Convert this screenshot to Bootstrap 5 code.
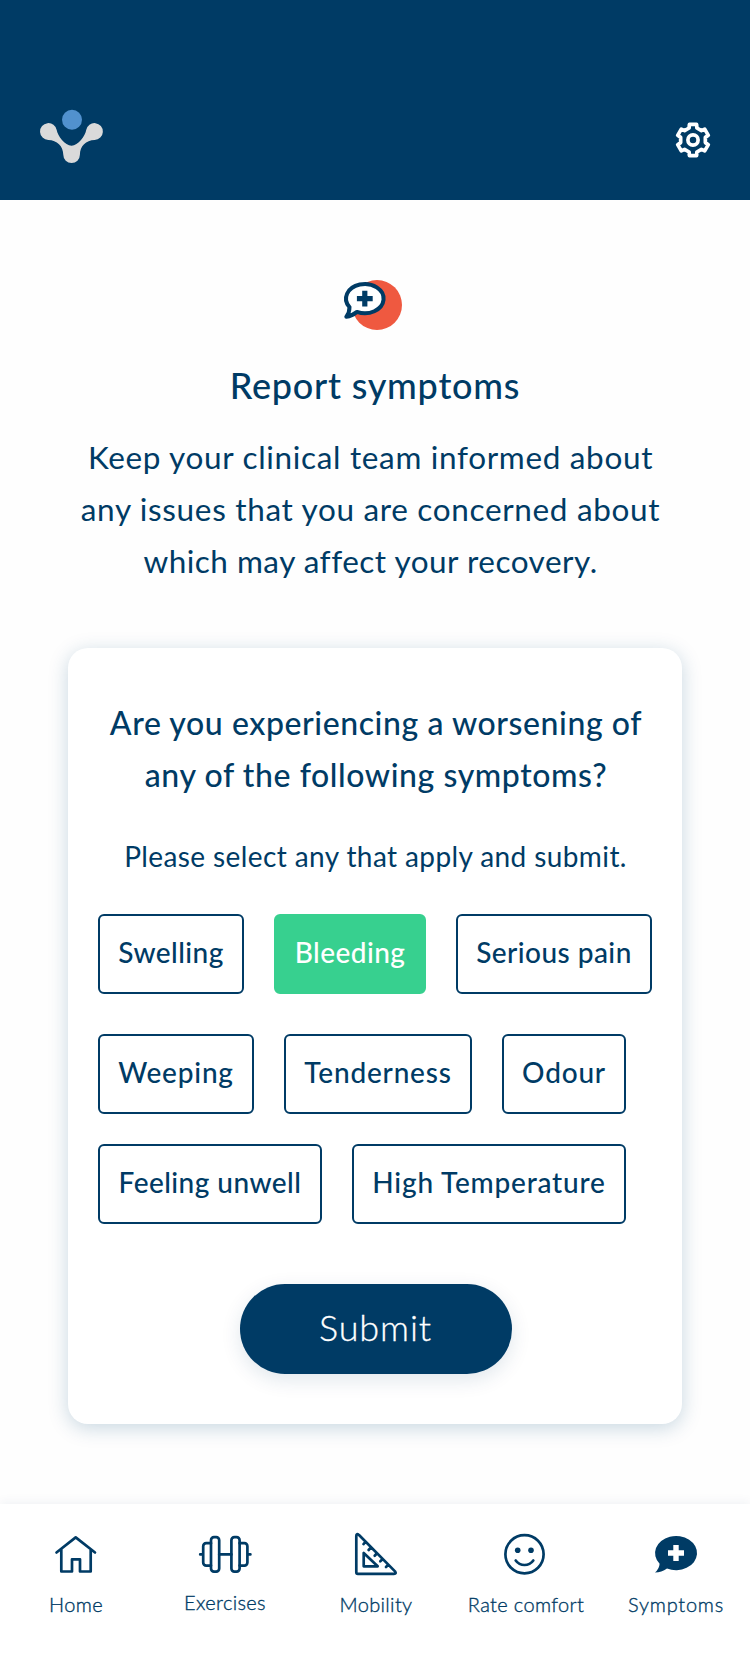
<!DOCTYPE html>
<html lang="en">
<head>
<meta charset="utf-8">
<meta name="viewport" content="width=device-width, initial-scale=1">
<title>Report symptoms</title>
<link href="https://cdn.jsdelivr.net/npm/bootstrap@5.3.0/dist/css/bootstrap.min.css" rel="stylesheet">
<style>
:root{--navy:#003b65}
body{font-family:Lato,"Open Sans",sans-serif;color:var(--navy);background:#fefefe}
svg{display:block;overflow:visible}
.line-icon{fill:none;stroke:var(--navy);stroke-width:2.7;stroke-linecap:round;stroke-linejoin:round}
.topbar{height:200px;background:var(--navy);padding:106px 37px 0 36px}
.topbar .gear{margin-top:14px}
.intro-icon{margin-top:75px}
.page-title{font-size:36px;line-height:48px;font-weight:500;letter-spacing:.75px;margin-top:26px}
.intro{font-size:31.5px;line-height:52px;margin-top:22px;padding-right:9px;letter-spacing:.67px}
.intro .last-line{letter-spacing:.5px}
.question-card{width:614px;height:776px;margin:61px auto 0;padding:49px 30px 50px;border:0;border-radius:20px;background:#fff;box-shadow:0 4px 20px rgba(0,74,120,.22)}
.question{font-size:32px;line-height:52px;font-weight:500;letter-spacing:.58px;padding-left:2px}
.hint{font-size:28px;line-height:40px;margin-top:35px;letter-spacing:.4px;padding-left:1px}
.chips{display:grid;gap:30px;height:80px}
.chips-a{grid-template-columns:146px 152px 196px;margin-top:38px}
.chips-b{grid-template-columns:156px 188px 124px;margin-top:40px}
.chips-c{grid-template-columns:224px 274px;margin-top:30px}
.chip{border:2px solid var(--navy);border-radius:6px;color:var(--navy);font-size:28px;font-weight:500;letter-spacing:.45px;padding:0 0 4px;white-space:nowrap}
.chips-b .chip,.chip.wide{letter-spacing:.8px}
.chip.active{background:#37d08f;border-color:#37d08f;color:#fff}
.submit{width:272px;height:90px;border:0;border-radius:45px;margin:60px 0 0 142px;background:var(--navy);color:#fff;font-size:36px;font-weight:300;letter-spacing:.9px;padding:0 1px 4px 0;-webkit-text-stroke:.3px #fff;box-shadow:0 6px 20px rgba(0,59,101,.12)}
.tabs{height:170px;margin-top:80px;background:#fff;box-shadow:0 -2px 10px rgba(0,59,101,.06);padding-top:20px}
.tab{width:150px;color:var(--navy);font-size:20px;line-height:30px;letter-spacing:.35px;text-decoration:none;white-space:nowrap}
.tab span{padding-left:2px;margin-top:5px;font-weight:300;-webkit-text-stroke:.35px var(--navy)}
.tab .raised{margin-top:3px;padding-left:0}
.tab .loose{letter-spacing:.75px}
</style>
</head>
<body>
<header class="topbar d-flex justify-content-between align-items-start">
  <svg width="72" height="60" viewBox="0 0 72 60" aria-label="Logo">
    <circle cx="36" cy="13.7" r="10" fill="#5191ce"/>
    <path fill="#dadada" d="M12.3 33.9A8.4 8.4 0 1 1 20.7 24C21.5 29.5 29 39.7 35.6 39.7C42 39.7 49.5 29.5 50.2 24A8.4 8.4 0 1 1 58.6 33.9C50 34 44 40 43.9 48.8A8.3 8.3 0 0 1 27.3 48.8C27.2 40 21 34 12.3 33.9Z"/>
  </svg>
  <svg class="gear" width="40" height="40" viewBox="-20 -20 40 40" fill="none" stroke="#fff" stroke-width="3.7" stroke-linejoin="round" aria-label="Settings">
    <path d="M-3.9-12L-3.6-15.6H3.6L3.9-12L8.44-9.38L11.71-10.92L15.31-4.68L12.34-2.62V2.62L15.31 4.68L11.71 10.92L8.44 9.38L3.9 12L3.6 15.6H-3.6L-3.9 12L-8.44 9.38L-11.71 10.92L-15.31 4.68L-12.34 2.62V-2.62L-15.31-4.68L-11.71-10.92L-8.44-9.38Z"/>
    <circle r="5.1"/>
  </svg>
</header>
<main>
  <svg class="intro-icon mx-auto" width="70" height="60" viewBox="0 0 70 60">
    <circle cx="37" cy="30" r="25" fill="#ef5940"/>
    <path d="M9.5 32.1A18.8 14.6 0 1 1 17 36.9Q12 41 6.3 41.8Q9.5 38 9.5 32.1Z" fill="#fff" stroke="#003b65" stroke-width="4" stroke-linejoin="round"/>
    <path d="M24.8 15.8V31.6M16.9 23.7H32.7" stroke="#003b65" stroke-width="5.2"/>
  </svg>
  <h1 class="page-title text-center mb-0">Report symptoms</h1>
  <p class="intro text-center mb-0">Keep your clinical team informed about<br>any issues that you are concerned about<br><span class="last-line">which may affect your recovery.</span></p>
  <section class="question-card card">
    <h2 class="question text-center mb-0">Are you experiencing a worsening of<br>any of the following symptoms?</h2>
    <p class="hint text-center mb-0">Please select any that apply and submit.</p>
    <div class="chips chips-a">
      <button type="button" class="btn chip">Swelling</button>
      <button type="button" class="btn chip active">Bleeding</button>
      <button type="button" class="btn chip">Serious pain</button>
    </div>
    <div class="chips chips-b">
      <button type="button" class="btn chip">Weeping</button>
      <button type="button" class="btn chip">Tenderness</button>
      <button type="button" class="btn chip">Odour</button>
    </div>
    <div class="chips chips-c">
      <button type="button" class="btn chip">Feeling unwell</button>
      <button type="button" class="btn chip wide">High Temperature</button>
    </div>
    <button type="button" class="btn submit">Submit</button>
  </section>
</main>
<nav class="tabs d-flex">
  <a class="tab d-flex flex-column align-items-center">
    <svg class="line-icon" width="60" height="60" viewBox="0 0 60 60"><path d="M11.5 28.5L30.7 13.4L50 28.5M16.3 25.5V47.5H27V35.3H35V47.5H45.7V25.5"/></svg>
    <span>Home</span>
  </a>
  <a class="tab d-flex flex-column align-items-center">
    <svg class="line-icon" width="60" height="60" viewBox="0 0 60 60"><rect x="16" y="13.2" width="8.2" height="34.4" rx="3"/><rect x="36.4" y="13.2" width="8.2" height="34.4" rx="3"/><path d="M16 19.2H11.2a3 3 0 0 0-3 3V38.6a3 3 0 0 0 3 3H16M44.6 19.2H49.4a3 3 0 0 1 3 3V38.6a3 3 0 0 1-3 3H44.6M24.2 30.4H36.4M5.2 30.4H8.2M52.4 30.4H55.4"/></svg>
    <span class="raised">Exercises</span>
  </a>
  <a class="tab d-flex flex-column align-items-center">
    <svg class="line-icon" width="60" height="60" viewBox="0 0 60 60"><path d="M11.3 12V48.3Q11.3 49.8 12.8 49.8H49Q51.8 49.8 50 47.4L14 11Q11.3 9 11.3 12ZM18.7 29V42.3H32.7ZM20.7 17.7L18.5 20.1M26 23.3L23.6 26M32 29.3L29.7 31.7M37.7 35L35.3 37.3M43.3 40.7L41 43"/></svg>
    <span>Mobility</span>
  </a>
  <a class="tab d-flex flex-column align-items-center">
    <svg class="line-icon" width="60" height="60" viewBox="0 0 60 60"><circle cx="29.5" cy="30.3" r="19.1"/><path d="M20.7 36.5Q24 41 29.5 41T38.3 36.5"/><g fill="#003b65" stroke="none"><circle cx="22.7" cy="26.2" r="2.8"/><circle cx="36" cy="26.2" r="2.8"/></g></svg>
    <span>Rate comfort</span>
  </a>
  <a class="tab d-flex flex-column align-items-center">
    <svg width="60" height="60" viewBox="0 0 60 60"><path fill="#003b65" d="M14.6 39.7A21 17.1 0 1 1 22 44.5Q16.5 48.3 10 48.5Q14.4 44.5 14.6 39.7Z"/><path d="M31 21V37M23 29H39" stroke="#fff" stroke-width="5.4"/></svg>
    <span class="loose">Symptoms</span>
  </a>
</nav>
</body>
</html>
